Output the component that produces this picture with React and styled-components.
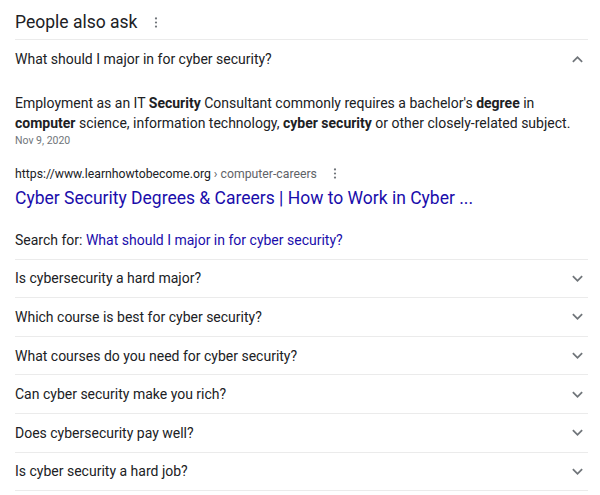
import React from 'react'
import styled, { createGlobalStyle } from 'styled-components'

const GlobalStyle = createGlobalStyle`
    body {
        margin: 0;
        background: #fff;
        font-family: Roboto, Arial, sans-serif;
        color: #202124;
    }
`;

const questions = [
    'Is cybersecurity a hard major?',
    'Which course is best for cyber security?',
    'What courses do you need for cyber security?',
    'Can cyber security make you rich?',
    'Does cybersecurity pay well?',
    'Is cyber security a hard job?',
]

function Chevron({ up }) {
    return (
        <ChevronIcon viewBox="0 0 24 24" $up={up}>
            <path d="M7.41 8.59 12 13.17l4.59-4.58L18 10l-6 6-6-6z" fill="#70757a" />
        </ChevronIcon>
    )
}

function Dots() {
    return (
        <DotsIcon viewBox="0 0 4 12">
            <circle cx="2" cy="1.6" r="1.2" fill="#70757a" />
            <circle cx="2" cy="6" r="1.2" fill="#70757a" />
            <circle cx="2" cy="10.4" r="1.2" fill="#70757a" />
        </DotsIcon>
    )
}

function App() {
    return (
        <>
            <GlobalStyle />
            <Panel>
                <Header>
                    <h2>People also ask</h2>
                    <Dots />
                </Header>

                <QuestionRow $open>
                    <span>What should I major in for cyber security?</span>
                    <Chevron up />
                </QuestionRow>

                <Answer>
                    <Snippet>
                        Employment as an IT <b>Security</b> Consultant commonly requires a bachelor's <b>degree</b> in{' '}
                        <b>computer</b> science, information technology, <b>cyber security</b> or other closely-related subject.
                    </Snippet>
                    <DateLine>Nov 9, 2020</DateLine>

                    <Source>
                        <span>https://www.learnhowtobecome.org</span>
                        <Crumb>› computer-careers</Crumb>
                        <Dots />
                    </Source>
                    <ResultLink href="#">Cyber Security Degrees &amp; Careers | How to Work in Cyber ...</ResultLink>

                    <SearchFor>
                        Search for: <a href="#">What should I major in for cyber security?</a>
                    </SearchFor>
                </Answer>

                {questions.map((q) => (
                    <QuestionRow key={q}>
                        <span>{q}</span>
                        <Chevron />
                    </QuestionRow>
                ))}
            </Panel>
        </>
    )
}

export default App

const Panel = styled.div`
    width: 573px;
    margin-left: 15px;
`;

const Header = styled.div`
    display: flex;
    align-items: center;
    gap: 17px;
    height: 40px;
    padding-top: 5px;
    box-sizing: border-box;
    border-bottom: 1px solid #ebebeb;

    h2 {
        margin: 0;
        font-size: 17.5px;
        font-weight: 400;
        color: #202124;
        line-height: 23px;
    }
`;

const DotsIcon = styled.svg`
    width: 4px;
    height: 11px;
    flex-shrink: 0;
`;

const QuestionRow = styled.div`
    display: flex;
    align-items: center;
    justify-content: space-between;
    height: 38.6px;
    box-sizing: border-box;
    border-bottom: ${(p) => (p.$open ? 'none' : '1px solid #ebebeb')};
    font-size: 14px;
    color: #202124;
`;

const ChevronIcon = styled.svg`
    width: 21px;
    height: 21px;
    transform: ${(p) => (p.$up ? 'rotate(180deg)' : 'none')};
`;

const Answer = styled.div`
    padding-top: 14px;
    padding-bottom: 9px;
    border-bottom: 1px solid #ebebeb;
`;

const Snippet = styled.div`
    font-size: 14px;
    line-height: 20px;
    color: #202124;

    b {
        font-weight: 700;
    }
`;

const DateLine = styled.div`
    font-size: 10.5px;
    line-height: 16px;
    color: #70757a;
`;

const Source = styled.div`
    display: flex;
    align-items: center;
    margin-top: 14px;
    font-size: 12.25px;
    line-height: 22px;
    color: #202124;

    svg {
        margin-left: 16px;
    }
`;

const Crumb = styled.span`
    color: #5f6368;
    margin-left: 3px;
`;

const ResultLink = styled.a`
    display: block;
    font-size: 17.5px;
    line-height: 26px;
    color: #1a0dab;
    text-decoration: none;
`;

const SearchFor = styled.div`
    margin-top: 19px;
    font-size: 14px;
    line-height: 20px;
    color: #202124;

    a {
        color: #1a0dab;
        text-decoration: none;
    }
`;
